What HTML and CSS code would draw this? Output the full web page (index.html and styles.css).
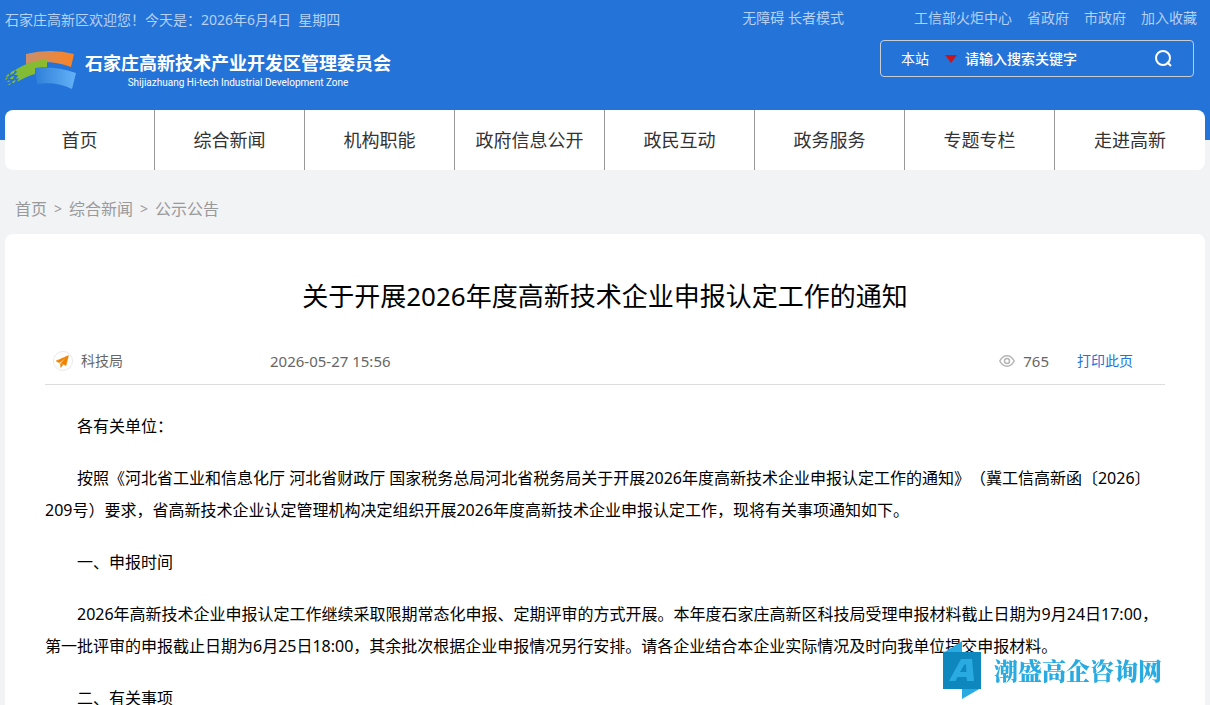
FILE: index.html
```html
<!DOCTYPE html>
<html lang="zh-CN">
<head>
  <meta charset="UTF-8" />
  <meta name="viewport" content="width=device-width, initial-scale=1.0" />
  <title>关于开展2026年度高新技术企业申报认定工作的通知</title>
  <link rel="stylesheet" href="styles.css">
</head>
<body>
  <header class="header">
    <div class="wrap header-inner">
      <div class="header-left">
        <div class="welcome">石家庄高新区欢迎您！今天是：2026年6月4日&nbsp; 星期四</div>
        <a class="logo" href="#">
          <svg class="logo-mark" width="72" height="40" viewBox="0 0 72 40" aria-hidden="true">
            <defs>
              <linearGradient id="orange"><stop offset="0" stop-color="#c98f6c"/><stop offset="1" stop-color="#fa8324"/></linearGradient>
              <linearGradient id="blue"><stop offset="0" stop-color="#2f7fd8"/><stop offset="1" stop-color="#63b2f8"/></linearGradient>
              <linearGradient id="green"><stop offset="0" stop-color="#7dbb3c"/><stop offset="1" stop-color="#8dbb2b"/></linearGradient>
            </defs>
            <path d="M21 4Q45-2 69 4L66 17Q44 9 21 14Z" fill="url(#orange)"/>
            <path d="M10 20Q24 11 42 9V17L30 18V24Q22 26 12 32L14 28L11 29L13 25L9 25L12 22Z" fill="url(#green)"/>
            <path d="M30 18Q50 16 71 23L67 39Q51 31 32 34Z" fill="url(#blue)"/>
            <g fill="#86bd35">
              <path d="M6 22l4-2-1 3-4 2zM2 25l2-1v2l-3 1zM6 27l3-1-1 3H5zM1 28l2-1-1 2-2 1zM3 31l2-1-1 2H2zM8 31l3-1-2 3H7zM4 34l2-1-1 2H3z"/>
            </g>
          </svg>
          <span class="logo-text">
            <strong class="logo-name">石家庄高新技术产业开发区管理委员会</strong>
            <span class="logo-en">Shijiazhuang Hi-tech Industrial Development Zone</span>
          </span>
        </a>
      </div>
      <div class="header-right">
        <div class="top-links">
          <a class="access" href="#">无障碍 长者模式</a>
          <a href="#">工信部火炬中心</a>
          <a href="#">省政府</a>
          <a href="#">市政府</a>
          <a href="#">加入收藏</a>
        </div>
        <form class="search">
          <select class="search-scope" aria-label="搜索范围">
            <option>本站</option>
          </select>
          <svg class="search-arrow" width="12" height="8" viewBox="0 0 12 8" aria-hidden="true"><path d="M0 0h12L6 8z" fill="#c7161e"/></svg>
          <input class="search-input" type="text" placeholder="请输入搜索关键字" aria-label="搜索关键字">
          <button class="search-btn" type="button" aria-label="搜索">
            <svg width="18" height="18" viewBox="0 0 18 18" fill="none" stroke="#fff" stroke-width="2"><circle cx="8" cy="8" r="7"/><path d="M12 12L16 16"/></svg>
          </button>
        </form>
      </div>
    </div>
  </header>

  <nav class="wrap nav">
    <a href="#">首页</a>
    <a href="#">综合新闻</a>
    <a href="#">机构职能</a>
    <a href="#">政府信息公开</a>
    <a href="#">政民互动</a>
    <a href="#">政务服务</a>
    <a href="#">专题专栏</a>
    <a href="#">走进高新</a>
  </nav>

  <div class="wrap crumbs">
    <a href="#">首页</a>
    <span class="sep">&gt;</span>
    <a href="#">综合新闻</a>
    <span class="sep">&gt;</span>
    <a href="#">公示公告</a>
  </div>

  <main class="wrap article">
    <h1>关于开展2026年度高新技术企业申报认定工作的通知</h1>
    <div class="meta">
      <div class="source">
        <svg width="20" height="20" viewBox="0 0 20 20" aria-hidden="true">
          <circle cx="10" cy="10" r="9.500" fill="#fff" stroke="#e9e9e9"/>
          <path d="M15.500 4.500L3 10L6.500 11.800L12.500 7L8 12.200L13 14.500ZM7.300 12.500L10 13.700L7.800 16.500Z" fill="#f08300" stroke="#f08300" stroke-width=".5"/>
        </svg>
        <span>科技局</span>
      </div>
      <time class="date">2026-05-27 15:56</time>
      <div class="views">
        <svg width="16" height="12" viewBox="0 0 16 12" fill="none" stroke="#b5b5b5" stroke-width="1.500" aria-hidden="true"><path d="M.8 6Q3.500.8 8 .8T15.200 6Q12.500 11.200 8 11.200T.8 6Z"/><circle cx="8" cy="6" r="2.500"/></svg>
        <span>765</span>
      </div>
      <a class="print" href="#">打印此页</a>
    </div>
    <div class="content">
      <p>各有关单位：</p>
      <p>按照《河北省工业和信息化厅 河北省财政厅 国家税务总局河北省税务局关于开展2026年度高新技术企业申报认定工作的通知》（冀工信高新函〔2026〕209号）要求，省高新技术企业认定管理机构决定组织开展2026年度高新技术企业申报认定工作，现将有关事项通知如下。</p>
      <p>一、申报时间</p>
      <p>2026年高新技术企业申报认定工作继续采取限期常态化申报、定期评审的方式开展。本年度石家庄高新区科技局受理申报材料截止日期为9月24日17:00，第一批评审的申报截止日期为6月25日18:00，其余批次根据企业申报情况另行安排。请各企业结合本企业实际情况及时向我单位提交申报材料。</p>
      <p>二、有关事项</p>
    </div>
  </main>

  <div class="watermark">
    <svg width="38" height="58" viewBox="0 0 38 58" aria-hidden="true">
      <path d="M0 12L19 0V12ZM19 47H38L19 58Z" fill="#29abe2"/>
      <path d="M0 11H38V48H0Z" fill="#0d87bd"/>
      <path d="M6 40L18 18H29L31 40H24L23.500 36H14.500L12.500 40ZM17 31H23.500L23 23.500H21.500Z" fill="#29abe2" fill-rule="evenodd"/>
    </svg>
    <span>潮盛高企咨询网</span>
  </div>
</body>
</html>
```
FILE: styles.css
```css
* {
  box-sizing: border-box;
}

body {
  margin: 0;
  font-family: "Noto Sans", "Noto Sans CJK SC", sans-serif;
  font-size: 14px;
  background: #f1f3f5;
  color: #000;
}

a {
  color: inherit;
  text-decoration: none;
}

svg {
  display: block;
  flex: none;
}

.wrap {
  max-width: 1200px;
  margin: 0 auto;
}

/* header */
.header {
  background: #2473d9;
  padding: 0 5px 30px;
}

.header-inner {
  display: flex;
  justify-content: space-between;
  min-height: 110px;
}

.welcome,
.top-links {
  line-height: 20px;
  color: #b5d1f5;
}

.welcome {
  padding-top: 10px;
}

.logo {
  display: flex;
  align-items: flex-start;
  gap: 8px;
  margin-top: 20px;
  color: #fff;
}

.logo-text {
  display: flex;
  flex-direction: column;
  align-items: center;
}

.logo-name {
  font-size: 18px;
  line-height: 26px;
}

.logo-en {
  font-family: "Liberation Sans Narrow", Roboto, sans-serif;
  font-size: 10px;
  line-height: 14px;
}

.header-right {
  display: flex;
  flex-direction: column;
  align-items: flex-end;
  padding-top: 8px;
}

.top-links {
  display: flex;
  gap: 15px;
  padding-right: 8px;
}

.top-links .access {
  margin-right: 55px;
}

.search {
  display: flex;
  align-items: center;
  width: 314px;
  height: 37px;
  margin: 12px 11px 0 0;
  padding: 0 20px;
  border: 1px solid #c8cdd4;
  border-radius: 4px;
}

.search-scope,
.search-input,
.search-btn {
  padding: 0;
  border: 0;
  background: none;
  color: #fff;
  font-family: inherit;
  font-size: 14px;
}

.search-scope {
  appearance: none;
  width: 44px;
}

.search-scope option {
  color: #333;
}

.search-input {
  flex: 1;
  min-width: 0;
  margin-left: 8px;
  font-weight: 500;
  outline: none;
}

.search-input::placeholder {
  color: #fff;
}

.search-btn {
  cursor: pointer;
}

/* nav */
.nav {
  display: grid;
  grid-template-columns: repeat(8, 1fr);
  width: calc(100% - 10px);
  margin-top: -30px;
  background: #fff;
  border-radius: 8px;
}

.nav a {
  font-size: 18px;
  line-height: 60px;
  text-align: center;
  color: #333;
  border-right: 1px solid #999;
}

.nav a:last-child {
  border-right: 0;
}

/* breadcrumb */
.crumbs {
  display: flex;
  gap: 7px;
  width: calc(100% - 10px);
  padding: 23px 10px 9px;
  font-size: 16px;
  line-height: 32px;
  color: #999;
}

.crumbs .sep {
  font-size: 14px;
}

/* article */
.article {
  width: calc(100% - 10px);
  padding: 42px 40px 20px;
  background: #fff;
  border-radius: 8px;
}

.article h1 {
  margin: 0;
  font-size: 26px;
  font-weight: 400;
  line-height: 40px;
  text-align: center;
}

.meta {
  display: flex;
  align-items: center;
  margin-top: 22px;
  padding: 0 32px 0 8px;
  line-height: 46px;
  color: #666;
  border-bottom: 1px solid #ddd;
}

.source,
.views {
  display: flex;
  align-items: center;
  gap: 8px;
}

.source {
  width: 217px;
}

.date,
.views {
  font-size: 15px;
}

.views {
  margin-left: auto;
}

.print {
  margin-left: 28px;
  color: #2473d9;
}

.content {
  padding-top: 25px;
  font-size: 16px;
  line-height: 32px;
  text-spacing-trim: space-all;
}

.content p {
  margin: 0 0 20px;
  text-indent: 2em;
}

/* floating mark */
.watermark {
  position: fixed;
  right: 48px;
  bottom: 6px;
  display: flex;
  align-items: center;
  gap: 13px;
  font-family: "Noto Serif CJK SC", "Noto Sans CJK SC", sans-serif;
  font-size: 24px;
  font-weight: 900;
  line-height: 32px;
  color: #29abe2;
}
```
